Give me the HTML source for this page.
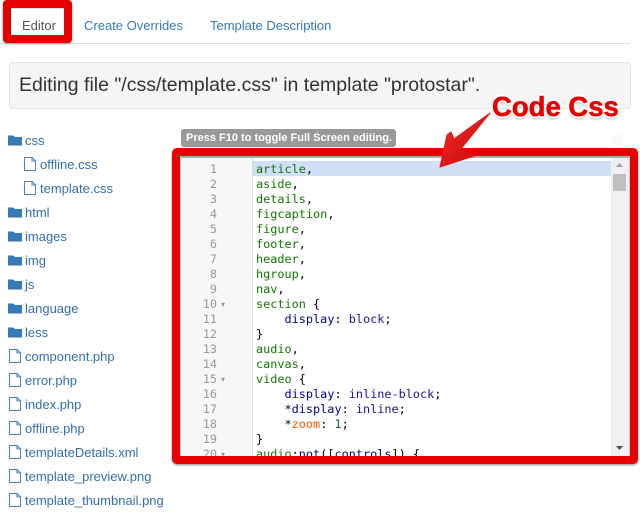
<!DOCTYPE html>
<html><head><meta charset="utf-8">
<style>
html,body{margin:0;padding:0;background:#fff}
body{width:640px;height:526px;position:relative;overflow:hidden;font-family:"Liberation Sans",sans-serif;font-size:13px;color:#555}
.a{position:absolute;white-space:nowrap}
.link{color:#337ab7}
.tree{position:absolute;left:0;top:1px}
.tree div{position:absolute;white-space:nowrap;height:24px;line-height:24px;font-size:13px;color:#336ea8}
#code,#nums{position:absolute;font-family:"DejaVu Sans Mono",monospace;font-size:11.85px;line-height:15px;white-space:pre}
#code{color:#000}
#nums{width:36px;text-align:right;color:#999}
.g{color:#117700}.b{color:#000088}.o{color:#ff5500}.n{color:#116644}.p{color:#221199}
</style></head><body>

<!-- tabs -->
<div class="a" style="left:0;top:43px;width:630px;height:1px;background:#ddd"></div>
<div class="a" style="left:3px;top:0;width:53px;height:27px;border:8px solid #e60000;border-radius:4px;background:#fff;box-shadow:0 1px 2px #999"></div>
<div class="a" style="left:11px;top:8px;width:53px;height:1px;background:#ddd"></div>
<div class="a" style="left:22px;top:17px;line-height:17px;color:#555;font-size:13px">Editor</div>
<div class="a link" style="left:84px;top:17px;line-height:17px;font-size:13px">Create Overrides</div>
<div class="a link" style="left:210px;top:17px;line-height:17px;font-size:13px">Template Description</div>

<!-- well -->
<div class="a" style="left:9px;top:62px;width:620px;height:45px;background:#f5f5f5;border:1px solid #e3e3e3;border-radius:4px"></div>
<div class="a" style="left:19px;top:72px;font-size:19.5px;line-height:26px;color:#333">Editing file "/css/template.css" in template "protostar".</div>

<!-- tree -->
<div class="tree">
<div style="left:25px;top:128px">css</div>
<div style="left:40px;top:152px">offline.css</div>
<div style="left:40px;top:176px">template.css</div>
<div style="left:25px;top:200px">html</div>
<div style="left:25px;top:224px">images</div>
<div style="left:25px;top:248px">img</div>
<div style="left:25px;top:272px">js</div>
<div style="left:25px;top:296px">language</div>
<div style="left:25px;top:320px">less</div>
<div style="left:25px;top:344px">component.php</div>
<div style="left:25px;top:368px">error.php</div>
<div style="left:25px;top:392px">index.php</div>
<div style="left:25px;top:416px">offline.php</div>
<div style="left:25px;top:440px">templateDetails.xml</div>
<div style="left:25px;top:464px">template_preview.png</div>
<div style="left:25px;top:488px">template_thumbnail.png</div>
</div>
<svg class="a" style="left:0;top:0" width="60" height="526">
<defs>
<path id="fo" d="M8 135.500h5.500l1.500 1.500h7v8.500h-14z" fill="#337ab7"/>
<path id="fi" d="M.5 .5h7.500l3.500 3.500v9.500h-11z M8 .5v3.500h3.500" fill="#fff" stroke="#4a7fb8" stroke-width="1"/>
</defs>
<use href="#fo"/><use href="#fo" y="72"/><use href="#fo" y="96"/><use href="#fo" y="120"/><use href="#fo" y="144"/><use href="#fo" y="168"/><use href="#fo" y="192"/>
<use href="#fi" x="24" y="157"/><use href="#fi" x="24" y="181"/>
<use href="#fi" x="9" y="349"/><use href="#fi" x="9" y="373"/><use href="#fi" x="9" y="397"/><use href="#fi" x="9" y="421"/><use href="#fi" x="9" y="445"/><use href="#fi" x="9" y="469"/><use href="#fi" x="9" y="493"/>
</svg>

<!-- label -->
<div class="a" style="left:181px;top:129px;width:215px;height:18px;background:#999;border-radius:3px;color:#fff;font-weight:bold;font-size:11px;line-height:18px;text-indent:5px">Press F10 to toggle Full Screen editing.</div>
<div class="a" style="left:612px;top:135px;width:11px;height:10px;background:#f9f9f9"></div>

<!-- editor -->
<div class="a" style="left:180px;top:156px;width:450px;height:302px;overflow:hidden;background:#fff;box-sizing:border-box;border-top:2px solid #aaa;border-left:1px solid #ccc;border-right:1px solid #ccc"></div>
<div class="a" style="left:181px;top:158px;width:71px;height:300px;background:#f7f7f7;border-right:1px solid #ddd"></div>
<div class="a" style="left:253px;top:161px;width:358px;height:15px;background:#d0dff4"></div>
<div class="a" style="left:611px;top:158px;width:18px;height:300px;background:#f0f0f0"></div>
<div class="a" style="left:613px;top:174px;width:13px;height:17px;background:#c0c0c0"></div>
<svg class="a" style="left:611px;top:158px" width="18" height="300"><path d="M5 9l3.500-4 3.500 4z" fill="#a3a3a3"/><path d="M5 288h7l-3.500 4z" fill="#505050"/></svg>
<div class="a" style="left:181px;top:158px;width:448px;height:300px;overflow:hidden">
<div id="nums" style="left:0;top:4px">1
2
3
4
5
6
7
8
9
10
11
12
13
14
15
16
17
18
19
20</div>
<div class="a" style="left:40px;top:4px;font-size:8px;line-height:15px;color:#999;white-space:pre;font-family:'DejaVu Sans',sans-serif">








▾




▾




▾</div>
<div id="code" style="left:75px;top:4px"><span class="g">article</span>,
<span class="g">aside</span>,
<span class="g">details</span>,
<span class="g">figcaption</span>,
<span class="g">figure</span>,
<span class="g">footer</span>,
<span class="g">header</span>,
<span class="g">hgroup</span>,
<span class="g">nav</span>,
<span class="g">section</span> {
    <span class="b">display</span>: <span class="p">block</span>;
}
<span class="g">audio</span>,
<span class="g">canvas</span>,
<span class="g">video</span> {
    <span class="b">display</span>: <span class="p">inline-block</span>;
    *<span class="b">display</span>: <span class="p">inline</span>;
    *<span class="o">zoom</span>: <span class="n">1</span>;
}
<span class="g">audio</span>:<span class="b">not</span>([<span class="b">controls</span>]) {</div>
</div>

<!-- red frame -->
<div class="a" style="left:172px;top:148px;width:450px;height:300px;border:8px solid #e60000;border-radius:5px;box-shadow:0 1px 2px #888"></div>

<!-- arrow + caption -->
<svg class="a" style="left:420px;top:85px" width="220" height="90">
<defs><linearGradient id="ar" x1="0" y1="0" x2="1" y2="1"><stop offset="0" stop-color="#f03030"/><stop offset="1" stop-color="#c80000"/></linearGradient></defs>
<path d="M70 28L40 65 54 71 20 82 27 50 31 47 34 54Z" fill="url(#ar)" stroke="#e01515" stroke-width="1" stroke-linejoin="round"/>
</svg>
<div class="a" style="left:492px;top:92px;font-size:27.5px;line-height:30px;font-weight:bold;color:#e60000;-webkit-text-stroke:.6px #e60000;text-shadow:1px 1px 0 #fff,-1px -1px 0 #fff,1px -1px 0 #fff,-1px 1px 0 #fff,2px 0 0 #fff,-2px 0 0 #fff,0 2px 0 #fff,0 -2px 0 #fff,0 3px 2px #bbb">Code Css</div>
</body></html>
